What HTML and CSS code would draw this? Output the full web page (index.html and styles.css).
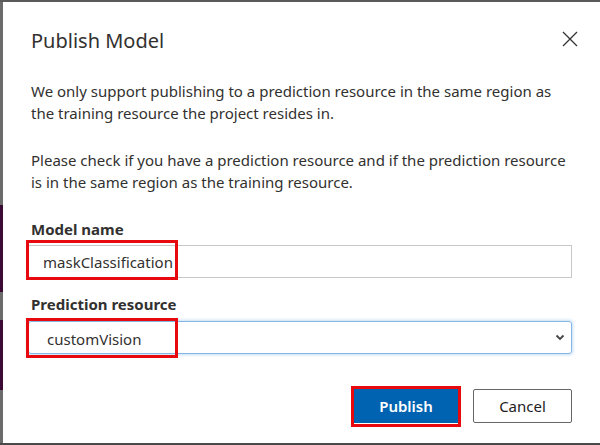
FILE: index.html
```html
<!DOCTYPE html>
<html>
<head>
<meta charset="utf-8">
<link rel="stylesheet" href="styles.css">
</head>
<body>
<div class="screen">
  <div class="edge"></div>
  <div class="dialog">
    <div class="head">
      <h1 class="title">Publish Model</h1>
      <button class="close" aria-label="Close">
        <svg width="16" height="16" viewBox="0 0 16 16"><path d="M1 1L15 15M15 1L1 15" stroke="#333" stroke-width="1.3" fill="none"/></svg>
      </button>
    </div>
    <p class="text first">We only support publishing to a prediction resource in the same region as the training resource the project resides in.</p>
    <p class="text second">Please check if you have a prediction resource and if the prediction resource is in the same region as the training resource.</p>
    <div class="label one">Model name</div>
    <div class="field">
      <div class="input">maskClassification</div>
      <span class="mark mark-input"></span>
    </div>
    <div class="label two">Prediction resource</div>
    <div class="field">
      <div class="select"><span class="sel-text">customVision</span>
        <svg class="chev" width="10" height="7" viewBox="0 0 10 7"><path d="M1.5 1.5L5 5L8.5 1.5" stroke="#444" stroke-width="1.8" fill="none"/></svg>
      </div>
      <span class="mark mark-select"></span>
    </div>
    <div class="actions">
      <div class="btn-wrap">
        <button class="btn primary">Publish</button>
        <span class="mark mark-btn"></span>
      </div>
      <button class="btn secondary">Cancel</button>
    </div>
  </div>
</div>
</body>
</html>
```
FILE: styles.css
```css
html, body {
  margin: 0;
  padding: 0;
  background: #fff;
}
.screen {
  width: 600px;
  height: 445px;
  box-sizing: border-box;
  border-top: 2px solid #5a5a5a;
  border-bottom: 2px solid #4a4a4a;
  display: flex;
  font-family: "Noto Sans", "Open Sans", sans-serif;
  color: #323130;
  overflow: hidden;
}
.edge {
  width: 3px;
  flex: none;
  background: linear-gradient(to bottom,
    #6b6b6b 0, #6b6b6b 203px,
    #3a0a35 203px, #3a0a35 290px,
    #6b6b6b 290px, #6b6b6b 318px,
    #3a0a35 318px, #3a0a35 388px,
    #6b6b6b 388px);
}
.dialog {
  flex: 1;
  padding: 25px 28px 0 25px;
  display: flex;
  flex-direction: column;
}
.head {
  display: flex;
  justify-content: space-between;
  align-items: center;
  height: 28px;
}
.title {
  margin: 0 0 0 3px;
  font-size: 20px;
  font-weight: 400;
  line-height: 28px;
}
.close {
  border: 0;
  background: none;
  padding: 0;
  width: 16px;
  height: 16px;
  margin-right: -6px;
  margin-top: -5px;
  display: flex;
}
.text {
  margin: 0 0 0 3px;
  font-size: 15px;
  line-height: 22px;
}
.first { margin-top: 25px; }
.second { margin-top: 25px; }
.label {
  margin-left: 3px;
  font-size: 15px;
  font-weight: 700;
  line-height: 20px;
}
.label.one { margin-top: 26px; }
.label.two { margin-top: 16px; }
.field {
  position: relative;
  margin-top: 6px;
}
.input, .select {
  box-sizing: border-box;
  height: 33px;
  border: 1px solid #c8c8c8;
  font-size: 15px;
  display: flex;
  align-items: center;
  padding-left: 14px;
}
.select {
  margin-top: 1px;
  padding-left: 18px;
  border-color: #86b6e4;
  border-radius: 3px;
  box-shadow: 0 0 3px 1px rgba(120, 180, 235, 0.45);
  justify-content: space-between;
  padding-right: 6px;
}
.sel-text { padding-top: 3px; }
.mark {
  position: absolute;
  border: 3px solid #e8090e;
  box-sizing: border-box;
  pointer-events: none;
}
.mark-input { left: -2px; top: -5px; width: 152px; height: 40px; }
.mark-select { left: -2px; top: -2px; width: 152px; height: 40px; }
.actions {
  margin-top: 35px;
  display: flex;
  justify-content: flex-end;
  gap: 15px;
}
.btn-wrap { position: relative; display: flex; }
.btn {
  height: 34px;
  font-family: inherit;
  font-size: 15px;
  padding: 0;
  box-sizing: border-box;
}
.primary {
  width: 104px;
  background: #0063b1;
  color: #fff;
  border: 0;
  font-weight: 600;
}
.secondary {
  width: 99px;
  background: #fff;
  color: #222;
  border: 1px solid #666;
  border-radius: 2px;
}
.mark-btn { left: -3px; top: -3px; width: 110px; height: 41px; }
```
